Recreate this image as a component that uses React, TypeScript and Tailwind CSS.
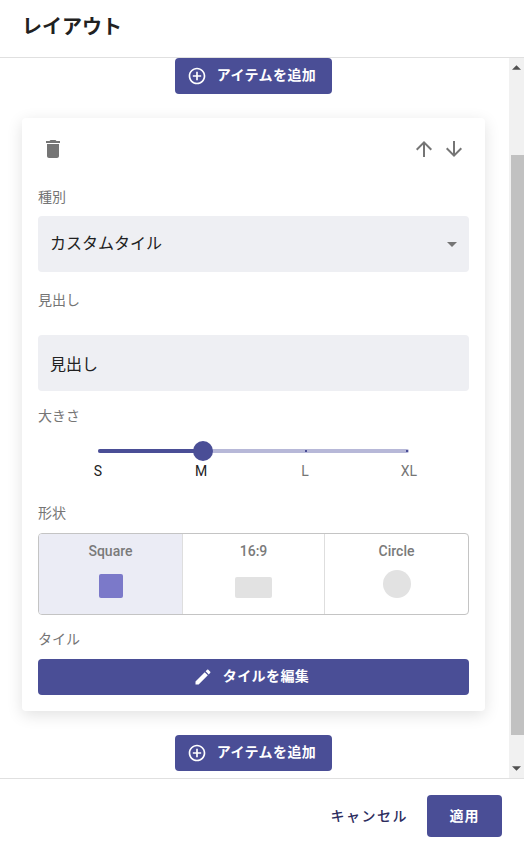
import React from "react";

function Plus() {
  return (
    <svg width="20" height="20" viewBox="0 0 24 24" fill="#fff">
      <path d="M13 7h-2v4H7v2h4v4h2v-4h4v-2h-4V7zm-1-5C6.48 2 2 6.48 2 12s4.48 10 10 10 10-4.48 10-10S17.52 2 12 2zm0 18c-4.41 0-8-3.59-8-8s3.59-8 8-8 8 3.59 8 8-3.59 8-8 8z" />
    </svg>
  );
}

function AddButton() {
  return (
    <button className="w-[157px] h-9 rounded bg-[#4a4e96] text-white text-[14px] font-bold flex items-center justify-center gap-[10px] leading-none pr-[4px]">
      <Plus />
      <span className="tracking-[0.4px] pb-[2px]">アイテムを追加</span>
    </button>
  );
}

function Label({ children }: { children: React.ReactNode }) {
  return <div className="text-[14px] leading-5 text-[#757575]">{children}</div>;
}

export default function App() {
  return (
    <div className="w-[524px] h-[850px] bg-white flex flex-col overflow-hidden font-['Roboto','Noto_Sans_CJK_JP',sans-serif] text-[#212121]">
      <div className="h-[58px] shrink-0 border-b border-[#e0e0e0] pl-[22px] flex items-center">
        <h1 className="text-[20px] font-bold leading-none -mt-[4px]">レイアウト</h1>
      </div>
      <div className="flex-1 flex min-h-0">
        <div className="flex-1 flex flex-col items-center min-w-0 pr-[2px]">
          <AddButton />
          <div className="mt-6 w-[463px] h-[593px] rounded bg-white shadow-[0_4px_16px_rgba(0,0,0,0.12)] px-4 pt-4 flex flex-col">
            <div className="flex justify-between items-center h-[30px]">
              <svg className="ml-[3px]" width="24" height="24" viewBox="0 0 24 24" fill="#757575">
                <path d="M6 19c0 1.1.9 2 2 2h8c1.1 0 2-.9 2-2V7H6v12zM19 4h-3.5l-1-1h-5l-1 1H5v2h14V4z" />
              </svg>
              <div className="flex gap-[6px] mr-[3px]">
                <svg width="24" height="24" viewBox="0 0 24 24" fill="#757575">
                  <path d="M4 12l1.41 1.41L11 7.83V20h2V7.83l5.58 5.59L20 12l-8-8-8 8z" />
                </svg>
                <svg width="24" height="24" viewBox="0 0 24 24" fill="#757575">
                  <path d="M20 12l-1.41-1.41L13 16.17V4h-2v12.17l-5.58-5.59L4 12l8 8 8-8z" />
                </svg>
              </div>
            </div>
            <div className="mt-[23px]"><Label>種別</Label></div>
            <div className="mt-[9px] h-14 rounded bg-[#eeeff3] flex items-center justify-between pl-3 pr-[12px]">
              <span className="text-[16px]">カスタムタイル</span>
              <svg width="10" height="5" viewBox="0 0 10 5" fill="#757575"><path d="M0 0l5 5 5-5z" /></svg>
            </div>
            <div className="mt-[18px]"><Label>見出し</Label></div>
            <div className="mt-[25px] h-14 rounded bg-[#eeeff3] flex items-center pl-3 pt-[3px] text-[16px]">見出し</div>
            <div className="mt-[15px]"><Label>大きさ</Label></div>
            <div className="relative mt-[15px] h-[20px] mx-[60px]">
              <div className="absolute left-0 right-0 top-[8px] h-1 rounded-full bg-[#b7b8d8]" />
              <div className="absolute left-0 w-[105px] top-[8px] h-1 rounded-full bg-[#4a4e96]" />
              <div className="absolute left-[207px] top-[9px] w-[2px] h-[2px] bg-[#4a4e96]" />
              <div className="absolute left-[308px] top-[9px] w-[2px] h-[2px] bg-[#4a4e96]" />
              <div className="absolute left-[95px] top-0 w-5 h-5 rounded-full bg-[#4a4e96]" />
            </div>
            <div className="relative h-5 text-[14px] leading-5 mx-[60px]">
              <span className="absolute -translate-x-1/2 left-0 text-[#212121]">S</span>
              <span className="absolute -translate-x-1/2 left-[103px] text-[#212121]">M</span>
              <span className="absolute -translate-x-1/2 left-[207px] text-[#757575]">L</span>
              <span className="absolute -translate-x-1/2 left-[311px] text-[#757575]">XL</span>
            </div>
            <div className="mt-[22px]"><Label>形状</Label></div>
            <div className="mt-[10px] h-[82px] rounded border border-[#c4c4c4] flex overflow-hidden text-[14px] leading-5 text-[#7a7a7a] font-medium">
              <div className="w-[144px] shrink-0 bg-[#ebecf5] border-r border-[#dedede] flex flex-col items-center pt-[7px]">
                <span>Square</span>
                <div className="mt-[13px] w-6 h-6 rounded-[2px] bg-[#7b79c9]" />
              </div>
              <div className="w-[142px] shrink-0 border-r border-[#dedede] flex flex-col items-center pt-[7px]">
                <span>16:9</span>
                <div className="mt-[16px] w-[37px] h-[21px] rounded-[2px] bg-[#e2e2e2]" />
              </div>
              <div className="flex-1 flex flex-col items-center pt-[7px]">
                <span>Circle</span>
                <div className="mt-[9px] w-7 h-7 rounded-full bg-[#e2e2e2]" />
              </div>
            </div>
            <div className="mt-[14px]"><Label>タイル</Label></div>
            <button className="mt-[10px] h-9 w-full rounded bg-[#4a4e96] text-white text-[14px] font-bold flex items-center justify-center gap-[10px] leading-none pr-[5px]">
              <svg width="20" height="20" viewBox="0 0 24 24" fill="#fff">
                <path d="M3 17.25V21h3.75L17.81 9.94l-3.75-3.75L3 17.25zM20.71 7.04c.39-.39.39-1.02 0-1.41l-2.34-2.34c-.39-.39-1.02-.39-1.41 0l-1.83 1.83 3.75 3.75 1.83-1.83z" />
              </svg>
              <span className="tracking-[0.4px] pb-[2px]">タイルを編集</span>
            </button>
          </div>
          <div className="mt-6"><AddButton /></div>
        </div>
        <div className="w-[15px] shrink-0 bg-[#f1f1f1] flex flex-col items-center relative">
          <svg className="mt-[7px]" width="9" height="5" viewBox="0 0 8 4" fill="#505050"><path d="M0 4l4-4 4 4z" /></svg>
          <div className="absolute left-[2px] right-0 top-[97px] h-[580px] bg-[#c1c1c1]" />
          <svg className="absolute bottom-[7px]" width="9" height="5" viewBox="0 0 8 4" fill="#505050"><path d="M0 0l4 4 4-4z" /></svg>
        </div>
      </div>
      <div className="h-[72px] shrink-0 border-t border-[#e0e0e0] flex items-start justify-end pr-[22px] pt-4 gap-[19px]">
        <button className="h-[42px] text-[14px] font-medium text-[#2c2c5e] tracking-[1.5px]">キャンセル</button>
        <button className="w-[75px] h-[42px] rounded bg-[#4a4e96] text-white text-[14px] font-bold tracking-[1px]">適用</button>
      </div>
    </div>
  );
}
